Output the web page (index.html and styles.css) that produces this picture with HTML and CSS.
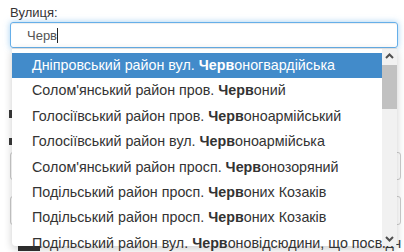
FILE: index.html
```html
<!DOCTYPE html>
<html lang="uk">
<head>
  <meta charset="UTF-8" />
  <title>Вулиця</title>
  <link rel="stylesheet" href="styles.css">
</head>
<body>
  <div class="field">
    <label class="label">Вулиця:</label>
    <div class="combo">
      <div class="input">Черв<span class="caret"></span></div>

      <div class="menu">
        <ul class="items">
          <li class="active">Дніпровський район вул. <b>Черв</b>оногвардійська</li>
          <li>Солом'янський район пров. <b>Черв</b>оний</li>
          <li>Голосіївський район пров. <b>Черв</b>оноармійський</li>
          <li>Голосіївський район вул. <b>Черв</b>оноармійська</li>
          <li>Солом'янський район просп. <b>Черв</b>онозоряний</li>
          <li>Подільський район просп. <b>Черв</b>оних Козаків</li>
          <li>Подільський район просп. <b>Черв</b>оних Козаків</li>
          <li>Подільський район вул. <b>Черв</b>оновідсюдини, що посвідч</li>
        </ul>
        <div class="scrollbar">
          <svg class="arrow" width="15" height="14" viewBox="0 0 15 14"><polyline points="4,9 7.5,5.5 11,9" fill="none" stroke="#505050" stroke-width="2"/></svg>
          <div class="thumb"></div>
          <div class="track"></div>
          <svg class="arrow" width="15" height="14" viewBox="0 0 15 14"><polyline points="4,5 7.5,8.5 11,5" fill="none" stroke="#505050" stroke-width="2"/></svg>
        </div>
      </div>
    </div>
  </div>

  <!-- form rows hidden behind the dropdown -->
  <div class="under">
    <div class="under-mark"></div>
    <div class="under-mark second"></div>
    <div class="under-input"></div>
    <div class="under-input last"></div>
    <div class="under-button"></div>
  </div>
</body>
</html>
```

FILE: styles.css
```css
body {
  margin: 0;
  padding: 5px 6px 0 10px;
  background: #fff;
  color: #333;
  font-family: "Liberation Sans", Arial, sans-serif;
  font-size: 13px;
  overflow: hidden;
  height: 252px;
  box-sizing: border-box;
}

.label {
  display: block;
  font-size: 13px;
  line-height: 16px;
  margin-bottom: 1px;
}

.combo {
  position: relative;
  z-index: 2;
}

.input {
  height: 26px;
  line-height: 26px;
  padding: 0 16px;
  border: 1px solid #66afe9;
  border-radius: 3px;
  box-sizing: border-box;
  box-shadow: inset 0 1px 1px rgba(0, 0, 0, 0.075), 0 0 6px rgba(102, 175, 233, 0.6);
  font-size: 13px;
  color: #555;
}

.caret {
  display: inline-block;
  width: 1px;
  height: 15px;
  background: #222;
  vertical-align: -3px;
}

.menu {
  position: absolute;
  top: 26px;
  left: 2px;
  right: 1px;
  height: 197px;
  display: flex;
  background: #fff;
  border-top: 1px solid #ddd;
  border-radius: 0 0 4px 4px;
  box-shadow: 0 3px 8px rgba(0, 0, 0, 0.2);
}

.items {
  flex: 1;
  min-width: 0;
  list-style: none;
  margin: 0;
  padding: 4px 0 0;
  font-size: 14.3px;
}

.items li {
  line-height: 25.4px;
  padding-left: 20px;
  white-space: nowrap;
}

.items li.active {
  background: #428bca;
  color: #fff;
}

.scrollbar {
  width: 15px;
  flex-shrink: 0;
  display: flex;
  flex-direction: column;
  background: #f1f1f1;
  border-radius: 0 0 4px 0;
}

.arrow {
  display: block;
}

.thumb {
  margin-top: 2px;
  height: 44px;
  background: #c1c1c1;
}

.track {
  flex: 1;
}

.under {
  position: relative;
  z-index: 1;
  padding-top: 62px;
}

.under-mark {
  width: 3px;
  height: 8px;
  margin-left: -1px;
  margin-bottom: 20px;
  background: #3a3a3a;
}

.under-mark.second {
  height: 7px;
  margin-bottom: 7px;
}

.under-input {
  height: 28px;
  box-sizing: border-box;
  border: 1px solid #ccc;
  border-radius: 3px;
  margin-right: -3px;
  margin-bottom: 16px;
}

.under-input.last {
  height: 29px;
  margin-bottom: 21px;
}

.under-button {
  width: 22px;
  height: 5px;
  margin-left: 8px;
  background: #333;
}
```
